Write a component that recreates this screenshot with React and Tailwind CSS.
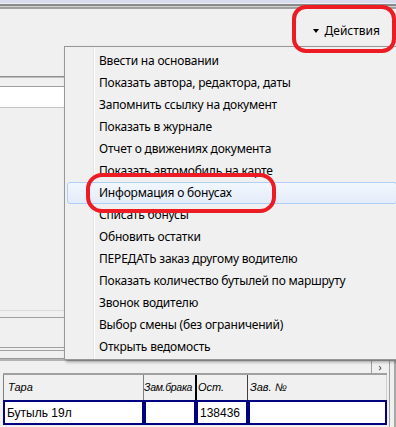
import React from 'react';

const menuItems = [
    'Ввести на основании',
    'Показать автора, редактора, даты',
    'Запомнить ссылку на документ',
    'Показать в журнале',
    'Отчет о движениях документа',
    'Показать автомобиль на карте',
    'Информация о бонусах',
    'Списать бонусы',
    'Обновить остатки',
    'ПЕРЕДАТЬ заказ другому водителю',
    'Показать количество бутылей по маршруту',
    'Звонок водителю',
    'Выбор смены (без ограничений)',
    'Открыть ведомость',
];

const HIGHLIGHT = 6;

const ActionsMenu = () => (
    <div className="absolute left-[64px] top-[46px] w-[334px] border border-[#979797] bg-[#f0f0f0] pb-[1px] pl-[2px] pt-[3px] tracking-[-0.2px] shadow-[2px_2px_3px_rgba(0,0,0,0.35)]">
        <div className="absolute bottom-0 left-[28px] top-0 w-px bg-[#e2e3e3]" />
        <div className="absolute bottom-0 left-[29px] top-0 w-px bg-white" />
        {menuItems.map((item, i) => (
            <div
                key={item}
                className={
                    i === HIGHLIGHT
                        ? 'relative flex h-[22px] items-center rounded-[3px] border border-[#aecff7] bg-gradient-to-b from-[#f2f7fd] to-[#e3ecf9] pl-[31px] text-black'
                        : 'relative flex h-[22px] items-center border border-transparent pl-[31px] text-black'
                }
            >
                {item}
            </div>
        ))}
    </div>
);

const GridTable = () => (
    <div className="flex h-[52px] pl-[3px]">
        <div className="flex w-[384px] flex-col font-['Liberation_Sans',sans-serif] text-[11px]">
            <div className="flex h-[27px] border-t-2 border-[#a0a0a0] bg-[#f0f0f0] italic text-black">
                <div className="flex w-[140px] items-center border-l border-[#808080] pl-[4px]">Тара</div>
                <div className="flex w-[52px] items-center overflow-hidden whitespace-nowrap border-l border-[#808080] text-[10.5px] tracking-[-0.3px]">Зам.брака</div>
                <div className="flex w-[52px] items-center border-l-2 border-black pl-[1px]">Ост.</div>
                <div className="flex flex-1 items-center border-l border-[#404040] border-r border-r-[#d0d0d0] pl-[2px]">Зав. №</div>
            </div>
            <div className="flex h-[25px] text-[12px] text-black">
                <div className="flex w-[141px] items-center border-2 border-[#000080] bg-white pl-[2px]">Бутыль 19л</div>
                <div className="w-[52px] border-2 border-[#000080] bg-white" />
                <div className="flex w-[52px] items-center border-2 border-[#000080] bg-white pl-[2px]">138436</div>
                <div className="flex-1 border-2 border-[#000080] bg-white" />
            </div>
        </div>
    </div>
);

const App = () => {
    return (
        <div className="relative flex h-[427px] w-[396px] flex-col overflow-hidden bg-[#f0f0f0] font-['Noto_Sans',sans-serif] text-[12px]">
            <div className="h-[3px] bg-[#d9dcef]" />
            <div className="h-px bg-[#f0f0f0]" />
            <div className="h-[2px] bg-[#8a8a8a]" />
            <div className="h-px bg-[#cfcfcf]" />
            <div className="h-[2px] bg-[#a0a0a0]" />

            <div className="flex h-[44px] items-center justify-end pr-[16px]">
                <span className="mr-[6px] h-0 w-0 border-x-[3px] border-t-[4px] border-x-transparent border-t-black" />
                <span className="text-black">Действия</span>
            </div>

            <div className="flex h-[305px] flex-col">
                <div className="h-[23px]" />
                <div className="h-px bg-[#8f8f8f]" />
                <div className="h-px bg-[#bdbdbd]" />
                <div className="h-[8px]" />
                <div className="h-[22px] border-y border-t-[#a0a0a0] border-b-[#c4c4c4] bg-white" />
                <div className="h-[202px]" />
                <div className="h-px bg-[#dcdcdc]" />
                <div className="h-[6px]" />
                <div className="h-px bg-[#a0a0a0]" />
                <div className="h-[29px]" />
                <div className="h-px bg-[#a0a0a0]" />
                <div className="h-[2px]" />
                <div className="h-px bg-[#a0a0a0]" />
            </div>

            <div className="h-px bg-[#9a9a9a]" />
            <div className="h-[2px] bg-[#b4b4b4]" />
            <div className="flex h-[12px] justify-end pr-[8px]">
                <div className="flex w-[17px] items-center justify-center border-l border-[#a0a0a0] text-[10px] leading-none text-[#333]">
                    ›
                </div>
            </div>

            <GridTable />

            <div className="absolute bottom-0 right-[6px] top-[361px] w-px bg-[#a0a0a0]" />
            <div className="absolute bottom-0 right-0 top-[361px] w-[2px] bg-[#a8a8a8]" />

            <ActionsMenu />

            <div className="pointer-events-none absolute left-[292px] top-[5px] h-[48px] w-[104px] rounded-[14px] border-[4px] border-[#ed1c24]" />
            <div className="pointer-events-none absolute left-[86px] top-[173px] h-[40px] w-[190px] rounded-[16px] border-[4px] border-[#ed1c24]" />
        </div>
    );
};

export default App;
